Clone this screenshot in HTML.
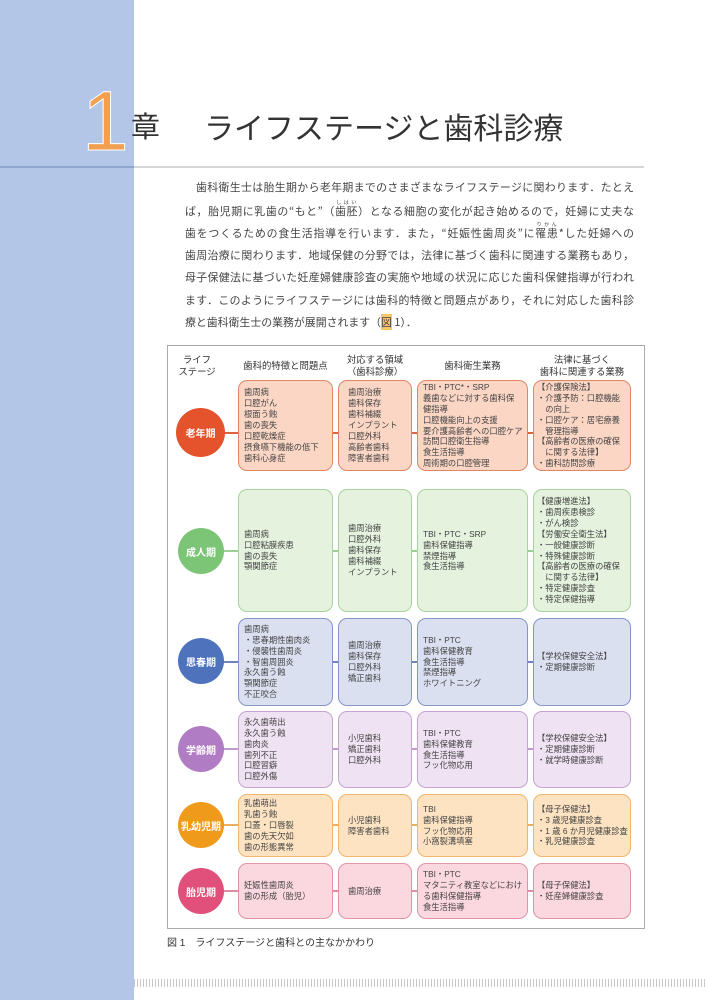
<!DOCTYPE html>
<html><head><meta charset="utf-8">
<style>
*{margin:0;padding:0;box-sizing:border-box}
body{width:707px;height:1000px;background:#fff;position:relative;overflow:hidden;font-family:"Liberation Sans","Noto Sans CJK JP",sans-serif;color:#333}
.side{position:absolute;left:0;top:0;width:134px;height:1000px;background:#b3c6e7}
.hl{position:absolute;left:134px;top:166px;width:510px;height:2px;background:#d6d6d6}
.hl2{position:absolute;left:0;top:166px;width:134px;height:2px;background:#8fa6cf}
.num{position:absolute;left:82px;top:76px;font-size:84px;line-height:90px;color:#f0a050;font-weight:normal;font-family:"Liberation Sans",sans-serif;-webkit-text-stroke:1px #fff}
.sho{position:absolute;left:131px;top:104px;font-size:29px;color:#333}
.ttl{position:absolute;left:204px;top:104px;font-size:30px;color:#333}
.body{position:absolute;left:185px;top:176px;width:449px;font-size:10.9px;line-height:22.5px;color:#444;font-family:"Noto Sans CJK JP",sans-serif}
.body div{white-space:nowrap;text-align:justify;text-align-last:justify;height:22.55px;overflow:visible}
.body div.last{text-align-last:left}
.body rt{font-size:5px;line-height:5px}
.fig{position:absolute;left:167px;top:345px;width:478px;height:584px;border:1px solid #aaa}
.h{position:absolute;font-size:9.4px;line-height:12px;text-align:center;color:#333}
.c{position:absolute;border-radius:50%;color:#fff;font-size:10px;font-weight:bold;display:flex;align-items:center;justify-content:center}
.b{position:absolute;border:1.5px solid;border-radius:9px;font-size:8.3px;line-height:10.9px;display:flex;align-items:center;padding:0 5px;color:#444;white-space:nowrap}
.ln{position:absolute;height:2px}
.cap{position:absolute;left:167px;top:934px;font-size:10px;color:#333}
.dots{position:absolute;left:134px;top:979px;width:573px;height:8px;background:repeating-linear-gradient(90deg,#c8c8c8 0 1px,#fff 1px 3px)}
</style></head><body>
<div class="side"></div><div class="hl2"></div><div class="hl"></div>
<div class="num">1</div>
<div class="sho">章</div>
<div class="ttl">ライフステージと歯科診療</div>
<div class="body">
<div style="padding-left:11px">歯科衛生士は胎生期から老年期までのさまざまなライフステージに関わります．たとえ</div>
<div>ば，胎児期に乳歯の“もと”（<ruby>歯胚<rt>しはい</rt></ruby>）となる細胞の変化が起き始めるので，妊婦に丈夫な</div>
<div>歯をつくるための食生活指導を行います．また，“妊娠性歯周炎”に<ruby>罹患<rt>りかん</rt></ruby>*した妊婦への</div>
<div>歯周治療に関わります．地域保健の分野では，法律に基づく歯科に関連する業務もあり，</div>
<div>母子保健法に基づいた妊産婦健康診査の実施や地域の状況に応じた歯科保健指導が行われ</div>
<div>ます．このようにライフステージには歯科的特徴と問題点があり，それに対応した歯科診</div>
<div class="last">療と歯科衛生士の業務が展開されます（<span style="background:#f6c66a">図</span> 1）．</div>
</div>
<div class="fig"></div>
<div class="h" style="left:172px;top:354px;width:50px">ライフ<br>ステージ</div>
<div class="h" style="left:238px;top:360px;width:95px">歯科的特徴と問題点</div>
<div class="h" style="left:338px;top:354px;width:74px">対応する領域<br>（歯科診療）</div>
<div class="h" style="left:417px;top:360px;width:111px">歯科衛生業務</div>
<div class="h" style="left:533px;top:354px;width:98px">法律に基づく<br>歯科に関連する業務</div>

<div class="ln" style="left:200px;top:432px;width:430px;background:#e0613e"></div>
<div class="c" style="left:176px;top:408px;width:49px;height:49px;background:#e4532c">老年期</div>
<div class="b" style="left:238px;top:380px;width:95px;height:91px;background:#fbd6c5;border-color:#e08668">歯周病<br>口腔がん<br>根面う蝕<br>歯の喪失<br>口腔乾燥症<br>摂食嚥下機能の低下<br>歯科心身症</div>
<div class="b" style="left:338px;top:380px;width:74px;height:91px;background:#fbd6c5;border-color:#e08668;padding-left:9px">歯周治療<br>歯科保存<br>歯科補綴<br>インプラント<br>口腔外科<br>高齢者歯科<br>障害者歯科</div>
<div class="b" style="left:417px;top:380px;width:111px;height:91px;background:#fbd6c5;border-color:#e08668">TBI・PTC*・SRP<br>義歯などに対する歯科保<br>健指導<br>口腔機能向上の支援<br>要介護高齢者への口腔ケア<br>訪問口腔衛生指導<br>食生活指導<br>周術期の口腔管理</div>
<div class="b" style="left:533px;top:380px;width:98px;height:91px;background:#fbd6c5;border-color:#e08668;padding:0 3px">【介護保険法】<br>・介護予防：口腔機能<br>　の向上<br>・口腔ケア：居宅療養<br>　管理指導<br>【高齢者の医療の確保<br>　に関する法律】<br>・歯科訪問診療</div>

<div class="ln" style="left:200px;top:550px;width:430px;background:#9ccf93"></div>
<div class="c" style="left:178px;top:528px;width:46px;height:46px;background:#7cc576">成人期</div>
<div class="b" style="left:238px;top:489px;width:95px;height:123px;background:#e4f2de;border-color:#a8d29e">歯周病<br>口腔粘膜疾患<br>歯の喪失<br>顎関節症</div>
<div class="b" style="left:338px;top:489px;width:74px;height:123px;background:#e4f2de;border-color:#a8d29e;padding-left:9px">歯周治療<br>口腔外科<br>歯科保存<br>歯科補綴<br>インプラント</div>
<div class="b" style="left:417px;top:489px;width:111px;height:123px;background:#e4f2de;border-color:#a8d29e">TBI・PTC・SRP<br>歯科保健指導<br>禁煙指導<br>食生活指導</div>
<div class="b" style="left:533px;top:489px;width:98px;height:123px;background:#e4f2de;border-color:#a8d29e;padding:0 3px">【健康増進法】<br>・歯周疾患検診<br>・がん検診<br>【労働安全衛生法】<br>・一般健康診断<br>・特殊健康診断<br>【高齢者の医療の確保<br>　に関する法律】<br>・特定健康診査<br>・特定保健指導</div>

<div class="ln" style="left:200px;top:661px;width:430px;background:#6e84bf"></div>
<div class="c" style="left:178px;top:638px;width:46px;height:46px;background:#4f72bd">思春期</div>
<div class="b" style="left:238px;top:618px;width:95px;height:88px;background:#dbe0f1;border-color:#8495c8">歯周病<br>・思春期性歯肉炎<br>・侵襲性歯周炎<br>・智歯周囲炎<br>永久歯う蝕<br>顎関節症<br>不正咬合</div>
<div class="b" style="left:338px;top:618px;width:74px;height:88px;background:#dbe0f1;border-color:#8495c8;padding-left:9px">歯周治療<br>歯科保存<br>口腔外科<br>矯正歯科</div>
<div class="b" style="left:417px;top:618px;width:111px;height:88px;background:#dbe0f1;border-color:#8495c8">TBI・PTC<br>歯科保健教育<br>食生活指導<br>禁煙指導<br>ホワイトニング</div>
<div class="b" style="left:533px;top:618px;width:98px;height:88px;background:#dbe0f1;border-color:#8495c8;padding:0 3px">【学校保健安全法】<br>・定期健康診断</div>

<div class="ln" style="left:200px;top:748px;width:430px;background:#c39ad0"></div>
<div class="c" style="left:178px;top:726px;width:46px;height:46px;background:#b07dc5">学齢期</div>
<div class="b" style="left:238px;top:711px;width:95px;height:77px;background:#efe2f3;border-color:#c7a2d3">永久歯萌出<br>永久歯う蝕<br>歯肉炎<br>歯列不正<br>口腔習癖<br>口腔外傷</div>
<div class="b" style="left:338px;top:711px;width:74px;height:77px;background:#efe2f3;border-color:#c7a2d3;padding-left:9px">小児歯科<br>矯正歯科<br>口腔外科</div>
<div class="b" style="left:417px;top:711px;width:111px;height:77px;background:#efe2f3;border-color:#c7a2d3">TBI・PTC<br>歯科保健教育<br>食生活指導<br>フッ化物応用</div>
<div class="b" style="left:533px;top:711px;width:98px;height:77px;background:#efe2f3;border-color:#c7a2d3;padding:0 3px">【学校保健安全法】<br>・定期健康診断<br>・就学時健康診断</div>

<div class="ln" style="left:200px;top:824px;width:430px;background:#efad5e"></div>
<div class="c" style="left:178px;top:802px;width:46px;height:46px;background:#ef9a1b">乳幼児期</div>
<div class="b" style="left:238px;top:794px;width:95px;height:63px;background:#fde3c2;border-color:#efb56e">乳歯萌出<br>乳歯う蝕<br>口蓋・口唇裂<br>歯の先天欠如<br>歯の形態異常</div>
<div class="b" style="left:338px;top:794px;width:74px;height:63px;background:#fde3c2;border-color:#efb56e;padding-left:9px">小児歯科<br>障害者歯科</div>
<div class="b" style="left:417px;top:794px;width:111px;height:63px;background:#fde3c2;border-color:#efb56e">TBI<br>歯科保健指導<br>フッ化物応用<br>小窩裂溝填塞</div>
<div class="b" style="left:533px;top:794px;width:98px;height:63px;background:#fde3c2;border-color:#efb56e;padding:0 3px">【母子保健法】<br>・3 歳児健康診査<br>・1 歳 6 か月児健康診査<br>・乳児健康診査</div>

<div class="ln" style="left:200px;top:890px;width:430px;background:#e58aa3"></div>
<div class="c" style="left:178px;top:868px;width:46px;height:46px;background:#e0507a">胎児期</div>
<div class="b" style="left:238px;top:863px;width:95px;height:56px;background:#fbd7e0;border-color:#df94a8">妊娠性歯周炎<br>歯の形成（胎児）</div>
<div class="b" style="left:338px;top:863px;width:74px;height:56px;background:#fbd7e0;border-color:#df94a8;padding-left:9px">歯周治療</div>
<div class="b" style="left:417px;top:863px;width:111px;height:56px;background:#fbd7e0;border-color:#df94a8">TBI・PTC<br>マタニティ教室などにおけ<br>る歯科保健指導<br>食生活指導</div>
<div class="b" style="left:533px;top:863px;width:98px;height:56px;background:#fbd7e0;border-color:#df94a8;padding:0 3px">【母子保健法】<br>・妊産婦健康診査</div>

<div class="cap">図 1　ライフステージと歯科との主なかかわり</div>
<div class="dots"></div>
</body></html>
